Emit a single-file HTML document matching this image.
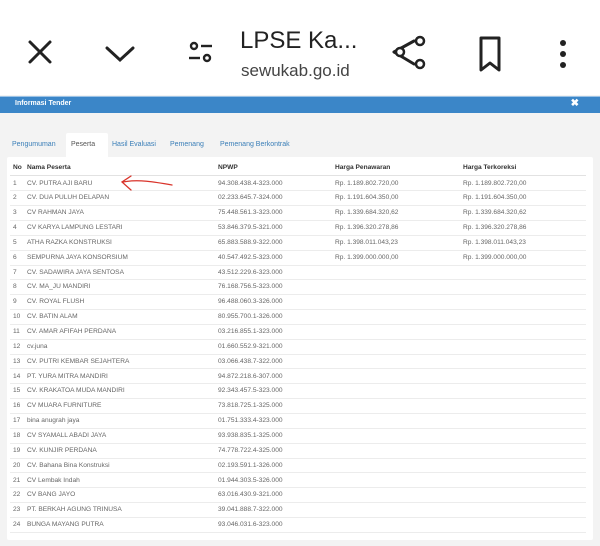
<!DOCTYPE html><html><head><style>
body{margin:0;width:600px;height:546px;background:#f3f3f3;font-family:"Liberation Sans",sans-serif;position:relative;overflow:hidden}
.top{position:absolute;left:0;top:0;width:600px;height:95px;background:#fff}
.bar{position:absolute;left:0;top:96px;width:600px;height:16px;background:#3b86c8;border-top:1px solid #9cc3e6}
.bar span{position:absolute;left:15px;top:3px;font-size:7px;color:#fff;font-weight:bold}
.bar b{position:absolute;right:21px;top:1px;font-size:10px;color:#fff}
.tabs{position:absolute;top:133px;left:6px;height:25px;font-size:7px;color:#3b7fb8}
.tabs span{position:absolute;top:8px;white-space:nowrap}
.tab-act{position:absolute;left:60px;top:0;width:42px;height:25px;background:#fff;border-radius:2px 2px 0 0}
.panel{position:absolute;left:7px;top:157px;width:586px;height:383px;background:#fff;border-radius:2px}
.r{position:absolute;left:10px;width:576px;height:14.8px;font-size:6.6px;color:#666;border-bottom:1px solid #ececec}
.r span{position:absolute;top:4px;white-space:nowrap}
.h{color:#333;font-weight:bold;border-bottom:1px solid #e2e2e2}
</style></head><body>
<div class="top">
<svg width="600" height="95" style="position:absolute;left:0;top:0">
<g stroke="#222" stroke-width="3" fill="none" stroke-linecap="round">
<path d="M30 42L50 62M50 42L30 62"/>
<path d="M107 48L120 60L133 48"/>
<path d="M394 52L414 41M394 52L414 64"/>
<path d="M481 38H499V70L490 63L481 70Z" stroke-linejoin="round"/>
</g>
<g stroke="#222" stroke-width="2.4" fill="none">
<circle cx="194" cy="46" r="3"/><path d="M201 46H212"/>
<path d="M189 58H200"/><circle cx="207" cy="58" r="3"/>
</g>
<g fill="#fff" stroke="#222" stroke-width="2.5"><circle cx="420" cy="41" r="4"/><circle cx="400" cy="52" r="4"/><circle cx="420" cy="64" r="4"/></g>
<g fill="#222"><circle cx="563" cy="43" r="3"/><circle cx="563" cy="54" r="3"/><circle cx="563" cy="65" r="3"/></g>
<text x="240" y="48" font-family="Liberation Sans" font-size="24" fill="#222">LPSE Ka...</text>
<text x="241" y="76" font-family="Liberation Sans" font-size="17" fill="#444">sewukab.go.id</text>
</svg></div>
<div class="bar"><span>Informasi Tender</span><b>✖</b></div>
<div class="tabs"><div class="tab-act"></div>
<span style="left:6px">Pengumuman</span><span style="left:65px;color:#555">Peserta</span><span style="left:106px">Hasil Evaluasi</span><span style="left:164px">Pemenang</span><span style="left:214px">Pemenang Berkontrak</span></div>
<div class="panel"></div>
<div id="t"></div>
<svg width="600" height="546" style="position:absolute;left:0;top:0;pointer-events:none"><path d="M172 185C155 182 138 179 123 182M131 176L122 182L131 190" stroke="#d9342b" stroke-width="1.3" fill="none" stroke-linecap="round"/></svg>
<script>
var d=[["CV. PUTRA AJI BARU","94.308.438.4-323.000","Rp. 1.189.802.720,00"],["CV. DUA PULUH DELAPAN","02.233.645.7-324.000","Rp. 1.191.604.350,00"],["CV RAHMAN JAYA","75.448.561.3-323.000","Rp. 1.339.684.320,62"],["CV KARYA LAMPUNG LESTARI","53.846.379.5-321.000","Rp. 1.396.320.278,86"],["ATHA RAZKA KONSTRUKSI","65.883.588.9-322.000","Rp. 1.398.011.043,23"],["SEMPURNA JAYA KONSORSIUM","40.547.492.5-323.000","Rp. 1.399.000.000,00"],["CV. SADAWIRA JAYA SENTOSA","43.512.229.6-323.000"],["CV. MA_JU MANDIRI","76.168.756.5-323.000"],["CV. ROYAL FLUSH","96.488.060.3-326.000"],["CV. BATIN ALAM","80.955.700.1-326.000"],["CV. AMAR AFIFAH PERDANA","03.216.855.1-323.000"],["cv.juna","01.660.552.9-321.000"],["CV. PUTRI KEMBAR SEJAHTERA","03.066.438.7-322.000"],["PT. YURA MITRA MANDIRI","94.872.218.6-307.000"],["CV. KRAKATOA MUDA MANDIRI","92.343.457.5-323.000"],["CV MUARA FURNITURE","73.818.725.1-325.000"],["bina anugrah jaya","01.751.333.4-323.000"],["CV SYAMALL ABADI JAYA","93.938.835.1-325.000"],["CV. KUNJIR PERDANA","74.778.722.4-325.000"],["CV. Bahana Bina Konstruksi","02.193.591.1-326.000"],["CV Lembak Indah","01.944.303.5-326.000"],["CV BANG JAYO","63.016.430.9-321.000"],["PT. BERKAH AGUNG TRINUSA","39.041.888.7-322.000"],["BUNGA MAYANG PUTRA","93.046.031.6-323.000"]];
var h='<div class="r h" style="top:160px"><span style="left:3px">No</span><span style="left:17px">Nama Peserta</span><span style="left:208px">NPWP</span><span style="left:325px">Harga Penawaran</span><span style="left:453px">Harga Terkoreksi</span></div>';
for(var i=0;i<d.length;i++){var y=175.5+i*14.85;h+='<div class="r" style="top:'+y+'px"><span style="left:3px">'+(i+1)+'</span><span style="left:17px">'+d[i][0]+'</span><span style="left:208px">'+d[i][1]+'</span>'+(d[i][2]?'<span style="left:325px">'+d[i][2]+'</span><span style="left:453px">'+d[i][2]+'</span>':'')+'</div>';}
document.getElementById('t').innerHTML=h;
</script>
</body></html>
